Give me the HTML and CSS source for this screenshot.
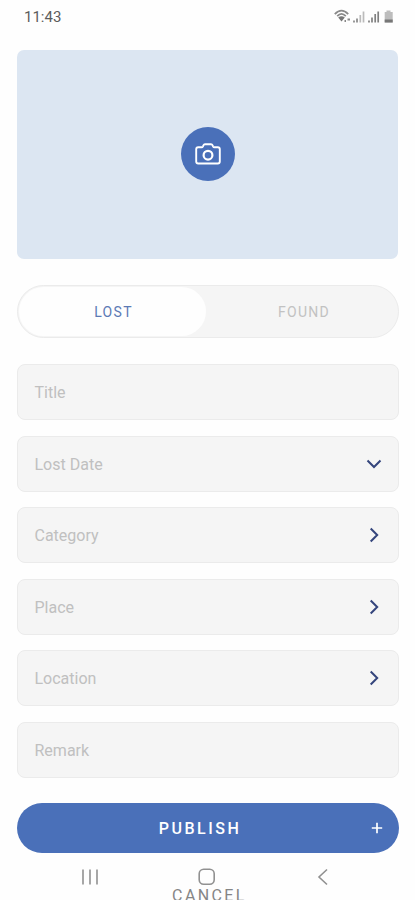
FILE: index.html
```html
<!DOCTYPE html>
<html lang="en">
<head>
<meta charset="utf-8">
<meta name="viewport" content="width=device-width, initial-scale=1">
<title>Lost and Found</title>
<link rel="stylesheet" href="styles.css">
</head>
<body>
<div class="screen">
  <header class="status">
    <span class="time">11:43</span>
    <svg class="status-icons" width="60" height="16" viewBox="0 0 60 16" aria-hidden="true">
      <g fill="none" stroke="#8a8a8a" stroke-width="1.8">
        <path d="M.8 5.200Q7.500 -1.800 14.200 5.200"/><path d="M3.200 7.200Q7.500 2.600 11.800 7.200"/>
      </g>
      <path d="M4.200 8.600Q7.500 6 10.800 8.600L7.500 12.500z" fill="#777"/>
      <path d="M10.500 12h1.500M13.500 10.500h2.500" stroke="#888" stroke-width="2.200"/>
      <g stroke-width="1.700" fill="none">
        <path d="M20 13.500v-2M23 13.500v-4" stroke="#888"/><path d="M26.300 13.500V6M29.500 13.500V2.500" stroke="#bbb"/>
        <path d="M35 13.500v-2M38 13.500v-5M41.200 13.500V5M44.200 13.500V2.500" stroke="#808080"/>
      </g>
      <path d="M52.500 1.500h4v1.500h2.200v10.500h-8V3h1.800z" fill="#bdbdbd"/>
      <path d="M50.700 10.500h8v3h-8z" fill="#777"/>
    </svg>
  </header>

  <main class="content">
    <div class="photo">
      <button class="camera" aria-label="Add photo">
        <svg width="26" height="22" viewBox="0 0 26 22" fill="none" stroke="#fff" stroke-width="1.9" stroke-linejoin="round">
          <path d="M3.200 4.300H6.600Q7.500 4.300 8 3.300L8.500 2.200Q8.900 1.200 10 1.200H16Q17.100 1.200 17.500 2.200L18 3.300Q18.500 4.300 19.400 4.300H22.800Q24.800 4.300 24.800 6.300V18.500Q24.800 20.500 22.800 20.500H3.200Q1.200 20.500 1.200 18.500V6.300Q1.200 4.300 3.200 4.300Z"/>
          <circle cx="13" cy="12.200" r="4.400" stroke-width="2.200"/>
        </svg>
      </button>
    </div>

    <div class="toggle">
      <div class="option active">LOST</div>
      <div class="option">FOUND</div>
    </div>

    <div class="fields">
      <div class="field">Title</div>
      <div class="field">Lost Date
        <svg class="chevron" width="16" height="16" viewBox="0 0 16 16"><path d="M1.500 4.500L8 11L14.500 4.500"/></svg>
      </div>
      <div class="field">Category
        <svg class="chevron" width="16" height="16" viewBox="0 0 16 16"><path d="M4.700 1.500L11.200 8L4.700 14.500"/></svg>
      </div>
      <div class="field">Place
        <svg class="chevron" width="16" height="16" viewBox="0 0 16 16"><path d="M4.700 1.500L11.200 8L4.700 14.500"/></svg>
      </div>
      <div class="field">Location
        <svg class="chevron" width="16" height="16" viewBox="0 0 16 16"><path d="M4.700 1.500L11.200 8L4.700 14.500"/></svg>
      </div>
      <div class="field">Remark</div>
    </div>

    <div class="publish">
      <span class="publish-label">PUBLISH</span>
      <svg width="12" height="12" viewBox="0 0 12 12"><path d="M6 .8v10.400M.8 6h10.400" stroke="#fff" stroke-width="1.700"/></svg>
    </div>
  </main>

  <nav class="system">
    <svg width="18" height="18" viewBox="0 0 18 18"><path d="M2 1.500v15M9 1.500v15M16 1.500v15" /></svg>
    <svg width="18" height="18" viewBox="0 0 18 18"><rect x="1.200" y="1.200" width="15" height="15" rx="4.500"/></svg>
    <svg width="18" height="18" viewBox="0 0 18 18"><path d="M13 1.500L5 9L13 16.500"/></svg>
  </nav>
  <div class="cancel">CANCEL</div>
</div>
</body>
</html>
```
FILE: styles.css
```css
* {
  box-sizing: border-box;
}

body {
  margin: 0;
  background: #fefefe;
  font-family: Roboto, "Liberation Sans", sans-serif;
}

.screen {
  height: 900px;
  overflow: hidden;
}

.status {
  height: 50px;
  padding: 8px 21px 0 24px;
  display: flex;
  justify-content: space-between;
  align-items: flex-start;
  color: #5c5c5c;
}

.time {
  font-size: 15px;
  line-height: 18px;
}

.status-icons {
  margin-top: 1px;
}

.content {
  padding: 0 16px 0 17px;
}

.photo {
  height: 209px;
  margin-right: 1px;
  padding-bottom: 1px;
  border-radius: 7px;
  background: #dce6f2;
  display: flex;
  align-items: center;
  justify-content: center;
}

.camera {
  width: 54px;
  height: 54px;
  padding: 0;
  border: 0;
  border-radius: 50%;
  background: #4a70b9;
  display: flex;
  align-items: center;
  justify-content: center;
}

.toggle {
  height: 53px;
  margin-top: 26px;
  padding: 1px;
  border: 1px solid #ebebeb;
  border-radius: 27px;
  background: #f5f5f5;
  display: flex;
}

.option {
  flex: 1;
  border-radius: 25px;
  display: flex;
  align-items: center;
  justify-content: center;
  padding: 1px 0 0 5px;
  font-size: 14px;
  letter-spacing: 1.3px;
  color: #c2c2c2;
}

.active {
  flex: 0 0 187px;
  padding-left: 2px;
  background: #fefefe;
  color: #5c7ab5;
}

.fields {
  margin-top: 26.4px;
  display: grid;
  gap: 15.5px;
}

.field {
  height: 56px;
  padding: 1px 16px 0 16.5px;
  border: 1px solid #ebebeb;
  border-radius: 8px;
  background: #f5f5f5;
  display: flex;
  align-items: center;
  justify-content: space-between;
  font-size: 16px;
  color: #c0c0c0;
}

.chevron {
  margin-top: -1px;
  fill: none;
  stroke: #34457c;
  stroke-width: 2;
}

.publish {
  height: 50px;
  margin-top: 25.1px;
  padding: 0 16px 0 12px;
  border-radius: 25px;
  background: #4a70b9;
  display: flex;
  align-items: center;
  color: #fff;
}

.publish-label {
  flex: 1;
  padding-top: 1px;
  text-align: center;
  font-size: 16px;
  font-weight: 500;
  letter-spacing: 2.5px;
}

.system {
  height: 33px;
  padding: 15px 83px 0 81px;
  display: flex;
  justify-content: space-between;
}

.system svg {
  fill: none;
  stroke: #919191;
  stroke-width: 1.6;
}

.cancel {
  padding-left: 4px;
  text-align: center;
  font-size: 16px;
  line-height: 20px;
  letter-spacing: 2.4px;
  color: #858585;
}
```
